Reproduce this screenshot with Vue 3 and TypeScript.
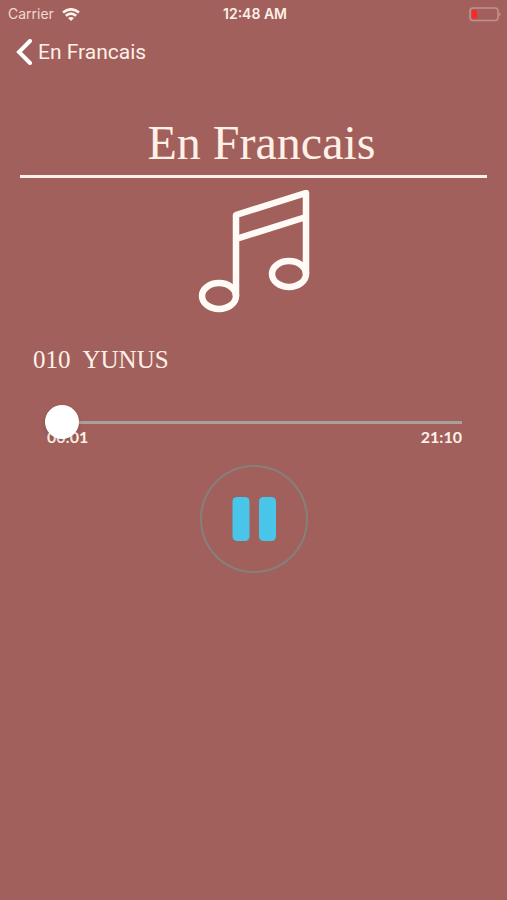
<script setup lang="ts">
import { computed, ref } from 'vue'

const title = 'En Francais'
const track = { number: '010', name: 'YUNUS' }
const duration = 1270
const position = ref(1)
const playing = ref(true)

function clock(seconds: number): string {
  const m = Math.floor(seconds / 60)
  const s = seconds % 60
  return `${String(m).padStart(2, '0')}:${String(s).padStart(2, '0')}`
}

const elapsed = computed(() => clock(position.value))
const total = clock(duration)
</script>

<template>
  <div class="screen">
    <header>
      <div class="status">
        <div class="carrier">
          <span>Carrier</span>
          <svg class="wifi" viewBox="0 0 18 13" aria-hidden="true">
            <path d="M1 4.6Q9-2 17 4.6M3.8 7.8Q9 3.4 14.2 7.8" />
            <path class="dot" d="M9 13L6 10Q9 7.8 12 10Z" />
          </svg>
        </div>
        <span class="time">12:48 AM</span>
        <svg class="battery" viewBox="0 0 33 15" aria-hidden="true">
          <rect class="shell" x="1" y="1" width="28" height="12.5" rx="3" />
          <rect class="charge" x="3" y="3" width="5" height="8.5" rx="0.5" />
          <path class="cap" d="M30.3 5Q33 7.2 30.3 9.5Z" />
        </svg>
      </div>
      <nav>
        <a class="back" href="#">
          <svg viewBox="0 0 16 26" aria-hidden="true"><path d="M14 2L3 13L14 24" /></svg>
          <span>{{ title }}</span>
        </a>
      </nav>
    </header>

    <main>
      <h1>{{ title }}</h1>
      <svg class="note" viewBox="0 0 112 124" aria-hidden="true">
        <path d="M38 106V25L108 3V84M38 49L108 27" />
        <ellipse cx="21" cy="106" rx="17" ry="13" />
        <ellipse cx="91" cy="84" rx="17" ry="13" />
      </svg>
      <h2>
        <span>{{ track.number }}</span>
        <span>{{ track.name }}</span>
      </h2>
      <div class="player">
        <input
          v-model.number="position"
          class="seek"
          type="range"
          min="0"
          :max="duration"
          aria-label="Position"
        />
        <div class="times">
          <span>{{ elapsed }}</span>
          <span>{{ total }}</span>
        </div>
      </div>
      <button
        class="toggle"
        type="button"
        :aria-label="playing ? 'Pause' : 'Play'"
        @click="playing = !playing"
      >
        <svg viewBox="0 0 44 44" aria-hidden="true">
          <template v-if="playing">
            <rect x="0.5" y="0" width="17" height="44" rx="4.5" />
            <rect x="27" y="0" width="17" height="44" rx="4.5" />
          </template>
          <path v-else d="M8 2L40 22L8 42Z" />
        </svg>
      </button>
    </main>
  </div>
</template>

<style>
body {
  margin: 0;
  background: #a1605c;
}
</style>

<style scoped>
.screen {
  min-height: 100vh;
  background: #a1605c;
  color: #fff0e8;
  font-family: Inter, "Liberation Sans", sans-serif;
}

.status {
  display: grid;
  grid-template-columns: 1fr auto 1fr;
  align-items: center;
  height: 28px;
  padding: 0 5px 0 8px;
  font-size: 14px;
  line-height: 20px;
}

.carrier {
  display: flex;
  align-items: center;
  gap: 8px;
  color: #f3d9d2;
}

.wifi {
  width: 18px;
  height: 13px;
  fill: none;
  stroke: #fff3ec;
  stroke-width: 2.6;
}

.wifi .dot {
  fill: #fff3ec;
  stroke: none;
}

.time {
  font-weight: 600;
}

.battery {
  justify-self: end;
  width: 33px;
  height: 15px;
}

.shell {
  fill: none;
  stroke: #c4908b;
  stroke-width: 1.6;
}

.charge {
  fill: #ff2528;
}

.cap {
  fill: #c99691;
}

nav {
  display: flex;
  align-items: center;
  height: 48px;
  padding: 0 16px;
}

.back {
  display: flex;
  align-items: center;
  gap: 6px;
  color: inherit;
  font-family: Roboto, "Liberation Sans", sans-serif;
  font-size: 21px;
  line-height: 26px;
  text-decoration: none;
}

.back svg {
  width: 16px;
  height: 26px;
  fill: none;
  stroke: #fff;
  stroke-width: 4;
  stroke-linecap: round;
}

main {
  display: flex;
  flex-direction: column;
  padding: 40px 20px 0;
}

h1,
h2 {
  margin: 0;
  font-family: "Liberation Serif", serif;
  font-weight: 400;
}

h1 {
  padding: 0 0 5px 16px;
  border-bottom: 3px solid #fff0ea;
  font-size: 48px;
  line-height: 54px;
  text-align: center;
}

.note {
  align-self: center;
  width: 112px;
  height: 124px;
  margin-top: 12px;
  fill: none;
  stroke: #fffaf5;
  stroke-width: 6.5;
  stroke-linejoin: round;
}

h2 {
  display: flex;
  gap: 12px;
  margin: 31px 13px 0;
  font-size: 25px;
  line-height: 30px;
}

.player {
  padding: 30px 25px 0;
}

.seek {
  position: relative;
  z-index: 1;
  display: block;
  width: 100%;
  height: 34px;
  margin: 0;
  appearance: none;
  background: linear-gradient(#a9a09c, #a9a09c) center / 100% 3px no-repeat;
}

.seek::-webkit-slider-thumb {
  width: 34px;
  height: 34px;
  appearance: none;
  border-radius: 50%;
  background: #fff;
  box-shadow: 0 2px 4px rgb(0 0 0 / 15%);
}

.times {
  display: flex;
  justify-content: space-between;
  margin-top: -12px;
  padding-left: 2px;
  font-family: Lato, "Liberation Sans", sans-serif;
  font-size: 16px;
  font-weight: 700;
  line-height: 20px;
}

.toggle {
  display: grid;
  place-items: center;
  align-self: center;
  width: 108px;
  height: 108px;
  margin-top: 18px;
  padding: 0;
  border: 2px solid #86807b;
  border-radius: 50%;
  background: none;
}

.toggle svg {
  width: 44px;
  height: 44px;
  fill: #49c5ea;
}
</style>
